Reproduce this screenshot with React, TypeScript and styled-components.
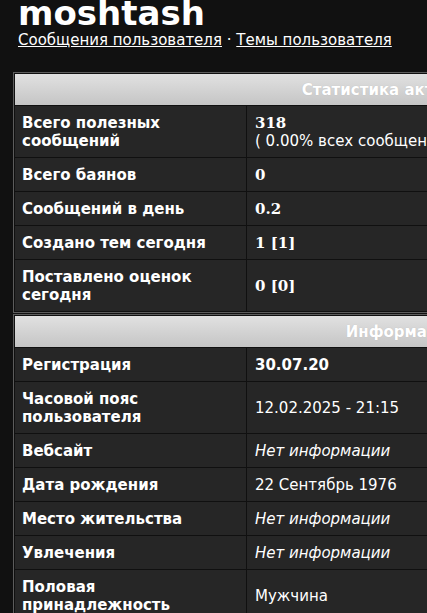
import styled, { createGlobalStyle } from "styled-components";

type Kind = "num" | "bold" | "plain" | "empty";

interface Row {
  label: string;
  value: string;
  kind: Kind;
  note?: string;
}

const stats: Row[] = [
  { label: "Всего полезных сообщений", value: "318", kind: "num", note: "( 0.00% всех сообщений )" },
  { label: "Всего баянов", value: "0", kind: "num" },
  { label: "Сообщений в день", value: "0.2", kind: "num" },
  { label: "Создано тем сегодня", value: "1 [1]", kind: "num" },
  { label: "Поставлено оценок сегодня", value: "0 [0]", kind: "num" },
];

const info: Row[] = [
  { label: "Регистрация", value: "30.07.20", kind: "bold" },
  { label: "Часовой пояс пользователя", value: "12.02.2025 - 21:15", kind: "plain" },
  { label: "Вебсайт", value: "Нет информации", kind: "empty" },
  { label: "Дата рождения", value: "22 Сентябрь 1976", kind: "plain" },
  { label: "Место жительства", value: "Нет информации", kind: "empty" },
  { label: "Увлечения", value: "Нет информации", kind: "empty" },
  { label: "Половая принадлежность", value: "Мужчина", kind: "plain" },
];

const StatTable = ({ title, rows }: { title: string; rows: Row[] }) => (
  <Table>
    <Head>{title}</Head>
    {rows.map((r) => (
      <Line key={r.label}>
        <Label>{r.label}</Label>
        <Value $kind={r.kind}>
          <span>{r.value}</span>
          {r.note && <Note>{r.note}</Note>}
        </Value>
      </Line>
    ))}
  </Table>
);

const App = () => {
  return (
    <>
      <GlobalStyle />
      <Page>
        <Header>
          <Name>moshtash</Name>
          <Links>
            <a href="#posts">Сообщения пользователя</a> · <a href="#topics">Темы пользователя</a>
          </Links>
        </Header>
        <Tables>
          <StatTable title="Статистика активности" rows={stats} />
          <StatTable title="Информация" rows={info} />
        </Tables>
      </Page>
    </>
  );
};

export default App;

// style
const GlobalStyle = createGlobalStyle`
  html, body {
    margin: 0;
    padding: 0;
    overflow: hidden;
    background: #111111;
  }
  body {
    color: #ffffff;
    font-family: "DejaVu Sans", Verdana, sans-serif;
    font-size: 15px;
  }
`;

const Page = styled.div`
  padding: 0 13px;
  width: 778px;
`;

const Header = styled.div`
  padding-left: 5px;
`;

const Name = styled.h1`
  margin: -4px 0 0;
  font-size: 34px;
  line-height: 34px;
  font-weight: bold;
  color: #ffffff;
`;

const Links = styled.div`
  margin-top: 1px;
  line-height: 18px;
  color: #ffffff;
  a {
    color: #ffffff;
    text-decoration: underline;
  }
`;

const Tables = styled.div`
  margin-top: 23px;
  display: flex;
  flex-direction: column;
  gap: 1px;
`;

const Table = styled.div`
  border: 1px solid #5c5c5c;
  background: #101010;
  padding: 1px;
  display: grid;
  grid-template-columns: 231px 1fr;
  gap: 1px;
`;

const Head = styled.div`
  grid-column: 1 / -1;
  height: 31px;
  display: flex;
  align-items: center;
  justify-content: center;
  background: linear-gradient(#e1e1e1, #c5c5c5);
  color: #ffffff;
  font-weight: bold;
  text-shadow: 0 0 1px rgba(0, 0, 0, 0.15);
`;

const Line = styled.div`
  display: contents;
`;

const Cell = styled.div`
  background: #262626;
  padding: 8px 7px 7px;
  line-height: 18px;
  display: flex;
  flex-direction: column;
  justify-content: center;
`;

const Label = styled(Cell)`
  font-weight: bold;
`;

const Value = styled(Cell)<{ $kind: Kind }>`
  padding-left: 8px;
  span:first-child {
    font-family: ${(p) => (p.$kind === "num" ? '"DejaVu Serif", serif' : "inherit")};
    font-weight: ${(p) => (p.$kind === "num" || p.$kind === "bold" ? "bold" : "normal")};
    font-style: ${(p) => (p.$kind === "empty" ? "italic" : "normal")};
  }
`;

const Note = styled.span`
  white-space: nowrap;
`;
